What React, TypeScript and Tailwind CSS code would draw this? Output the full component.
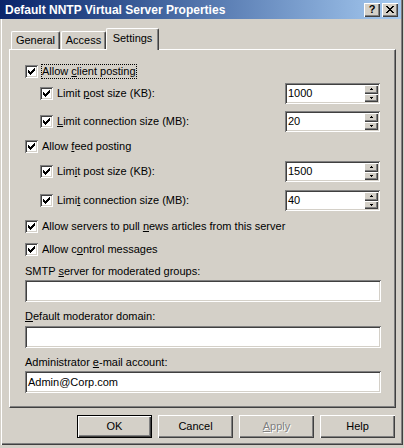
const raised =
  "shadow-[inset_1px_1px_0_#fff,inset_-1px_-1px_0_#404040,inset_-2px_-2px_0_#808080]";
const sunken =
  "shadow-[inset_1px_1px_0_#808080,inset_-1px_-1px_0_#fff,inset_2px_2px_0_#404040,inset_-2px_-2px_0_#d4d0c8]";

const CheckBox = () => (
  <div className={`w-[13px] h-[13px] shrink-0 bg-white ${sunken}`}>
    <svg width="13" height="13" className="block" shapeRendering="crispEdges">
      {[2, 3, 4, 3, 2, 1, 0].map((r, i) => (
        <rect key={i} x={3 + i} y={3 + r} width="1" height="3" fill="#000" />
      ))}
    </svg>
  </div>
);

const Arrow = ({ up }: { up?: boolean }) => (
  <svg width="3" height="2" className="block" shapeRendering="crispEdges">
    {up ? (
      <>
        <rect x="1" y="0" width="1" height="1" fill="#000" />
        <rect x="0" y="1" width="3" height="1" fill="#000" />
      </>
    ) : (
      <>
        <rect x="0" y="0" width="3" height="1" fill="#000" />
        <rect x="1" y="1" width="1" height="1" fill="#000" />
      </>
    )}
  </svg>
);

const Spinner = ({ value }: { value: string }) => (
  <div className={`ml-auto mr-[1px] w-[95px] h-[21px] bg-white flex p-[2px] ${sunken}`}>
    <div className="flex-1 pl-[1px] leading-[17px]">{value}</div>
    <div className="w-[14px] flex flex-col">
      <div className={`h-[9px] bg-[#d4d0c8] flex items-center justify-center ${raised}`}>
        <Arrow up />
      </div>
      <div className={`h-[8px] bg-[#d4d0c8] flex items-center justify-center ${raised}`}>
        <Arrow />
      </div>
    </div>
  </div>
);

type RowProps = {
  label: React.ReactNode;
  indent?: boolean;
  focus?: boolean;
  spin?: string;
  className?: string;
};

const CheckRow = ({ label, indent, focus, spin, className = "" }: RowProps) => (
  <div className={`h-[22px] flex items-center ${className}`}>
    <div className={indent ? "ml-[15px]" : ""}>
      <CheckBox />
    </div>
    <span
      className={`ml-[3px] border leading-[13px] ${
        focus ? "border-dotted border-black" : "border-transparent"
      }`}
    >
      {label}
    </span>
    {spin && <Spinner value={spin} />}
  </div>
);

const Edit = ({ value = "", className = "" }: { value?: string; className?: string }) => (
  <div className={`h-[22px] bg-white px-[3px] leading-[22px] ${sunken} ${className}`}>{value}</div>
);

const Button = ({
  children,
  def,
  disabled,
}: {
  children: React.ReactNode;
  def?: boolean;
  disabled?: boolean;
}) => (
  <div
    className={`w-[75px] h-[23px] flex items-center justify-center ${
      def
        ? "border border-black shadow-[inset_1px_1px_0_#fff,inset_-1px_-1px_0_#404040,inset_-2px_-2px_0_#808080]"
        : raised
    } ${disabled ? "text-[#808080] [text-shadow:1px_1px_0_#fff]" : ""}`}
  >
    {children}
  </div>
);

export default function App() {
  return (
    <div className="w-[404px] h-[448px] bg-[#d4d0c8] font-['Liberation_Sans',Arial,sans-serif] text-[11px] text-black">
      <div className="w-[403px] h-[445px] flex flex-col shadow-[inset_1px_0_0_#d4d0c8,inset_2px_0_0_#fff,inset_-1px_-1px_0_#404040,inset_-2px_-2px_0_#808080]">
        {/* title bar */}
        <div className="h-[19px] mr-[2px] flex items-center pl-[5px] pr-[3px] bg-linear-to-r from-[#0a246a] to-[#a6caf0]">
          <span className="text-white font-bold text-[12px]">Default NNTP Virtual Server Properties</span>
          <div className="ml-auto flex gap-[2px]">
            <div className={`w-[16px] h-[14px] bg-[#d4d0c8] flex items-center justify-center font-bold text-[11px] leading-none ${raised}`}>
              ?
            </div>
            <div className={`w-[16px] h-[14px] bg-[#d4d0c8] flex items-center justify-center ${raised}`}>
              <svg width="8" height="7" className="block -mt-[1px]" shapeRendering="crispEdges">
                {[0, 1, 2, 3, 4, 5, 6].map((i) => (
                  <g key={i}>
                    <rect x={i} y={i} width="2" height="1" fill="#000" />
                    <rect x={6 - i} y={i} width="2" height="1" fill="#000" />
                  </g>
                ))}
              </svg>
            </div>
          </div>
        </div>

        {/* tabs */}
        <div className="mt-[9px] h-[21px] flex items-end pl-[11px]">
          <div className="w-[49px] h-[18px] flex items-center justify-center border-t border-l border-r border-white border-r-[#404040] rounded-t-[2px] shadow-[inset_-1px_0_0_#808080]">
            General
          </div>
          <div className="ml-[1px] w-[45px] h-[18px] flex items-center justify-center border-t border-l border-r border-white border-r-[#404040] rounded-t-[2px] shadow-[inset_-1px_0_0_#808080]">
            Access
          </div>
          <div className="relative z-10 -mb-[1px] w-[53px] h-[22px] pb-[2px] bg-[#d4d0c8] flex items-center justify-center border-t border-l border-r border-white border-r-[#404040] rounded-t-[2px] shadow-[inset_-1px_0_0_#808080]">
            Settings
          </div>
        </div>

        {/* panel */}
        <div className="ml-[9px] w-[387px] h-[359px] flex flex-col pl-[15px] pr-[14px] border-t border-l border-r border-b border-white border-r-[#404040] border-b-[#404040] shadow-[inset_-1px_-1px_0_#808080]">
          <CheckRow
            className="mt-[10px]"
            focus
            label={
              <>
                Allow <u>c</u>lient posting
              </>
            }
          />
          <CheckRow
            indent
            spin="1000"
            label={
              <>
                Limit <u>p</u>ost size (KB):
              </>
            }
          />
          <CheckRow
            className="mt-[6px]"
            indent
            spin="20"
            label={
              <>
                <u>L</u>imit connection size (MB):
              </>
            }
          />
          <CheckRow
            className="mt-[3px]"
            label={
              <>
                Allow <u>f</u>eed posting
              </>
            }
          />
          <CheckRow
            className="mt-[3px]"
            indent
            spin="1500"
            label={
              <>
                Lim<u>i</u>t post size (KB):
              </>
            }
          />
          <CheckRow
            className="mt-[7px]"
            indent
            spin="40"
            label={
              <>
                Limi<u>t</u> connection size (MB):
              </>
            }
          />
          <CheckRow
            className="mt-[4px]"
            label={
              <>
                Allow servers to pull <u>n</u>ews articles from this server
              </>
            }
          />
          <CheckRow
            className="mt-[1px]"
            label={
              <>
                Allow c<u>o</u>ntrol messages
              </>
            }
          />

          <div className="mt-[5px] leading-[13px]">
            SMTP <u>s</u>erver for moderated groups:
          </div>
          <Edit className="mt-[2px]" />
          <div className="mt-[8px] leading-[13px]">
            <u>D</u>efault moderator domain:
          </div>
          <Edit className="mt-[3px]" />
          <div className="mt-[8px] leading-[13px]">
            Administrator <u>e</u>-mail account:
          </div>
          <Edit className="mt-[2px]" value="Admin@Corp.com" />
        </div>

        {/* buttons */}
        <div className="mt-[7px] pr-[8px] flex justify-end gap-[6px]">
          <Button def>OK</Button>
          <Button>Cancel</Button>
          <Button disabled>
            <span>
              <u>A</u>pply
            </span>
          </Button>
          <Button>Help</Button>
        </div>
      </div>
    </div>
  );
}
